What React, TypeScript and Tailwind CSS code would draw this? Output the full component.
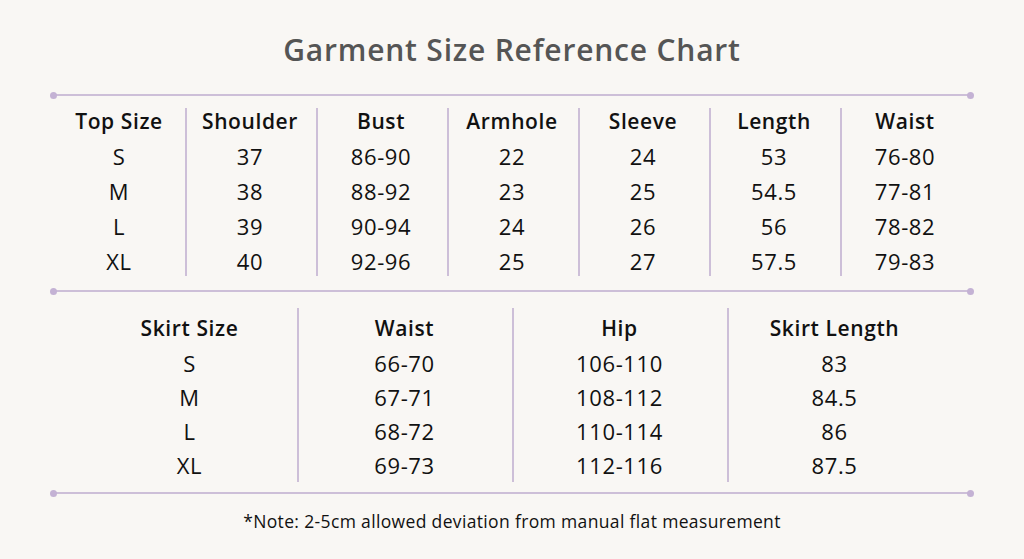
import React from "react";

const font = { fontFamily: '"Open Sans", "Noto Sans", sans-serif' };

function Rule() {
  return (
    <div className="relative mx-[53px] h-[8px] flex items-center">
      <div className="h-[2px] w-full bg-[#cdbfd8]" />
      <div className="absolute left-[-3px] top-[1px] w-[7px] h-[7px] rounded-full bg-[#c4b2d4]" />
      <div className="absolute right-[-3px] top-[1px] w-[7px] h-[7px] rounded-full bg-[#c4b2d4]" />
    </div>
  );
}

const topHead = ["Top Size", "Shoulder", "Bust", "Armhole", "Sleeve", "Length", "Waist"];
const topRows = [
  ["S", "37", "86-90", "22", "24", "53", "76-80"],
  ["M", "38", "88-92", "23", "25", "54.5", "77-81"],
  ["L", "39", "90-94", "24", "26", "56", "78-82"],
  ["XL", "40", "92-96", "25", "27", "57.5", "79-83"],
];
const skirtHead = ["Skirt Size", "Waist", "Hip", "Skirt Length"];
const skirtRows = [
  ["S", "66-70", "106-110", "83"],
  ["M", "67-71", "108-112", "84.5"],
  ["L", "68-72", "110-114", "86"],
  ["XL", "69-73", "112-116", "87.5"],
];

function Table({ head, rows, colW, rowH, padTop, divTop, divH }: { head: string[]; rows: string[][]; colW: number; rowH: number; padTop: number; divTop: number; divH: number }) {
  return (
    <div className="flex justify-center">
      {head.map((h, ci) => (
        <div key={ci} className="relative flex flex-col items-center" style={{ width: colW, paddingTop: padTop }}>
          {ci > 0 && (
            <div className="absolute left-0 w-[2px] bg-[#cdbfd8]" style={{ top: divTop, height: divH }} />
          )}
          <div className="flex items-center justify-center text-[21px] font-semibold text-[#111] tracking-[0.6px]" style={{ height: rowH }}>
            {h}
          </div>
          {rows.map((r, ri) => (
            <div key={ri} className="flex items-center justify-center text-[22px] text-[#111] tracking-[0.6px]" style={{ height: rowH }}>
              {r[ci]}
            </div>
          ))}
        </div>
      ))}
    </div>
  );
}

export default function App() {
  return (
    <div className="w-[1024px] h-[559px] bg-[#f9f7f4] overflow-hidden" style={font}>
      <div className="h-[91px] pt-[27px] text-center text-[30px] font-semibold text-[#555555] tracking-[0.8px]">
        Garment Size Reference Chart
      </div>
      <Rule />
      <div className="h-[188px]">
        <Table head={topHead} rows={topRows} colW={131} rowH={35} padTop={5} divTop={9} divH={168} />
      </div>
      <Rule />
      <div className="h-[194px]">
        <Table head={skirtHead} rows={skirtRows} colW={215} rowH={34.2} padTop={17} divTop={13} divH={174} />
      </div>
      <Rule />
      <div className="pt-[11px] text-center text-[17.5px] text-[#111] tracking-[0.35px]">
        *Note: 2-5cm allowed deviation from manual flat measurement
      </div>
    </div>
  );
}
